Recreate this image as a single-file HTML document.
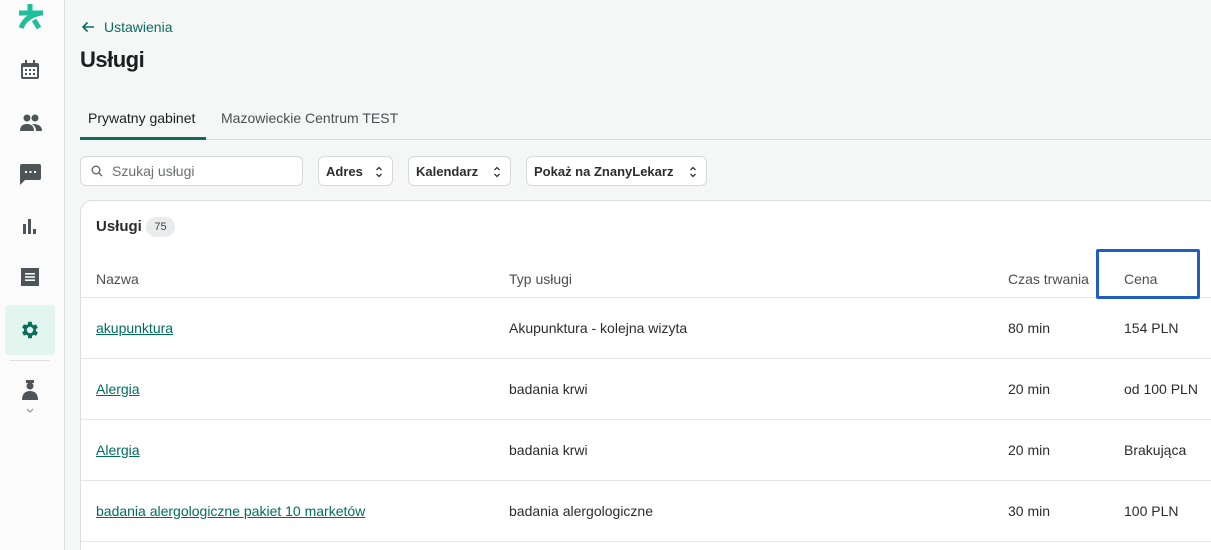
<!DOCTYPE html>
<html><head><meta charset="utf-8"><style>
*{box-sizing:border-box;margin:0;padding:0}
html,body{width:1211px;height:550px;overflow:hidden}
body{background:#f5f6f6;font-family:"Liberation Sans",sans-serif;color:#1c1f21;position:relative}
.sb{position:absolute;left:0;top:0;width:65px;height:550px;background:#fbfbfb;border-right:1px solid #dcdfe0}
.ic{position:absolute;left:20px}
.abs{position:absolute}
.btn{position:absolute;top:156px;height:30px;border:1px solid #d5d9db;border-radius:6px;background:#fff;font-size:13px;font-weight:bold;color:#2a2d2f;padding:7px 0 0 7px}
.btn svg{position:absolute;right:9px;top:9px}
.card{position:absolute;left:80px;top:200px;width:1140px;height:360px;background:#fff;border:1px solid #dcdfe0;border-radius:12px}
.row{position:absolute;left:81px;width:1130px;border-top:1px solid #e4e6e7}
.t{position:absolute;font-size:14px;color:#2a2d2f}
.lnk{color:#006d5b;text-decoration:underline}
.h{color:#4a4f52}
</style></head><body>
<div class="sb">
<svg class="abs" style="left:16px;top:4px" width="30" height="26" viewBox="0 0 30 26"><g stroke="#1fbf9a" stroke-width="5" fill="none"><path d="M3 9h24"/><path d="M14 0v9"/><path d="M5 24C8 16 14 11 25 9"/><path d="M18 16l5 8"/></g></svg>
<svg class="ic" style="top:60px" width="20" height="20" viewBox="0 0 20 20"><rect x="1" y="3" width="18" height="16" rx="2" fill="#4d5558"/><rect x="3" y="7" width="14" height="10" fill="#fbfbfb"/><rect x="5" y="0" width="2" height="4" fill="#4d5558"/><rect x="13" y="0" width="2" height="4" fill="#4d5558"/><g fill="#4d5558"><rect x="5" y="9" width="2" height="2"/><rect x="9" y="9" width="2" height="2"/><rect x="13" y="9" width="2" height="2"/><rect x="5" y="13" width="2" height="2"/><rect x="9" y="13" width="2" height="2"/><rect x="13" y="13" width="2" height="2"/></g></svg>
<svg class="ic" style="top:114px" width="22" height="18" viewBox="0 0 22 18"><circle cx="7" cy="4" r="3.5" fill="#4d5558"/><circle cx="15" cy="4" r="3.5" fill="#4d5558"/><path d="M0 17c0-5 3-7 7-7s7 2 7 7z" fill="#4d5558"/><path d="M12 10c5 0 10 1 10 7h-6c0-3-1-5-4-7z" fill="#4d5558"/></svg>
<svg class="ic" style="top:164px" width="21" height="21" viewBox="0 0 21 21"><path d="M0 2a2 2 0 012-2h17a2 2 0 012 2v12a2 2 0 01-2 2H5l-5 5z" fill="#4d5558"/><g fill="#fbfbfb"><rect x="5" y="7" width="2" height="2"/><rect x="9.5" y="7" width="2" height="2"/><rect x="14" y="7" width="2" height="2"/></g></svg>
<svg class="ic" style="top:217px" width="18" height="18" viewBox="0 0 18 18"><g fill="#4d5558"><rect x="3" y="7" width="3" height="10"/><rect x="8" y="2" width="3" height="15"/><rect x="13" y="12" width="3" height="5"/></g></svg>
<svg class="ic" style="top:267px" width="20" height="20" viewBox="0 0 20 20"><rect x="1" y="1" width="18" height="18" fill="#4d5558"/><g fill="#fbfbfb"><rect x="5" y="6" width="10" height="1.6"/><rect x="5" y="9.2" width="10" height="1.6"/><rect x="5" y="12.4" width="10" height="1.6"/></g></svg>
<div class="abs" style="left:5px;top:305px;width:50px;height:50px;background:#e2f6ef;border-radius:4px"></div>
<svg class="abs" style="left:19px;top:319px" width="22" height="22" viewBox="0 0 24 24"><path fill="#0b6e5c" d="M19.4 13a7.5 7.5 0 000-2l2.1-1.6-2-3.5-2.5 1a7 7 0 00-1.7-1L15 3h-4l-.4 2.7a7 7 0 00-1.7 1l-2.5-1-2 3.5L6.5 11a7.5 7.5 0 000 2l-2.1 1.6 2 3.5 2.5-1a7 7 0 001.7 1L11 21h4l.4-2.7a7 7 0 001.7-1l2.5 1 2-3.5zM13 15.5a3.5 3.5 0 110-7 3.5 3.5 0 010 7z" transform="translate(-1 0)"/></svg>
<div class="abs" style="left:10px;top:360px;width:40px;height:1px;background:#dcdfe0"></div>
<svg class="abs" style="left:22px;top:380px" width="16" height="20" viewBox="0 0 16 20"><rect x="4" y="0" width="8" height="3" fill="#4d5558"/><circle cx="8" cy="6" r="3.5" fill="#4d5558"/><path d="M0 20c0-6 3-9 8-9s8 3 8 9z" fill="#4d5558"/></svg>
<svg class="abs" style="left:26px;top:408px" width="8" height="5" viewBox="0 0 8 5"><path d="M1 1l3 3 3-3" stroke="#888" fill="none"/></svg>
</div>

<svg class="abs" style="left:81px;top:21px" width="14" height="12" viewBox="0 0 14 12"><path d="M13 6H2M6.5 1.5L2 6l4.5 4.5" stroke="#0b6e5c" stroke-width="1.6" fill="none"/></svg>
<div class="abs" style="left:104px;top:19px;font-size:14px;color:#0b6e5c">Ustawienia</div>
<div class="abs" style="left:80px;top:47px;font-size:22px;font-weight:bold;letter-spacing:-0.5px">Usługi</div>
<div class="abs" style="left:80px;top:139px;width:1131px;height:1px;background:#d9dcdd"></div>
<div class="abs" style="left:88px;top:110px;font-size:14px;color:#1c1f21">Prywatny gabinet</div>
<div class="abs" style="left:80px;top:137px;width:126px;height:3px;background:#0b6e5c"></div>
<div class="abs" style="left:221px;top:110px;font-size:14px;color:#4a4f52">Mazowieckie Centrum TEST</div>

<div class="abs" style="left:80px;top:156px;width:223px;height:30px;border:1px solid #d5d9db;border-radius:6px;background:#fff"></div>
<svg class="abs" style="left:91px;top:165px" width="12" height="12" viewBox="0 0 12 12"><circle cx="5" cy="5" r="3.8" stroke="#666" stroke-width="1.4" fill="none"/><path d="M8 8l3 3" stroke="#666" stroke-width="1.4"/></svg>
<div class="abs" style="left:112px;top:163px;font-size:14px;color:#6a7073">Szukaj usługi</div>
<div class="btn" style="left:318px;width:75px">Adres<svg width="8" height="12" viewBox="0 0 8 12"><path d="M1.5 4L4 1.5 6.5 4M1.5 8L4 10.5 6.5 8" stroke="#333" stroke-width="1.3" fill="none"/></svg></div>
<div class="btn" style="left:408px;width:103px">Kalendarz<svg width="8" height="12" viewBox="0 0 8 12"><path d="M1.5 4L4 1.5 6.5 4M1.5 8L4 10.5 6.5 8" stroke="#333" stroke-width="1.3" fill="none"/></svg></div>
<div class="btn" style="left:526px;width:181px">Pokaż na ZnanyLekarz<svg width="8" height="12" viewBox="0 0 8 12"><path d="M1.5 4L4 1.5 6.5 4M1.5 8L4 10.5 6.5 8" stroke="#333" stroke-width="1.3" fill="none"/></svg></div>

<div class="card"></div>
<div class="t" style="left:96px;top:218px;font-weight:bold;font-size:15px">Usługi</div>
<div class="abs" style="left:146px;top:217px;width:29px;height:20px;border-radius:10px;background:#e9ebec;font-size:11px;color:#444;text-align:center;padding-top:4px">75</div>

<div class="t h" style="left:96px;top:271px">Nazwa</div>
<div class="t h" style="left:509px;top:271px">Typ usługi</div>
<div class="t h" style="left:1008px;top:271px">Czas trwania</div>
<div class="t h" style="left:1124px;top:271px">Cena</div>

<div class="row" style="top:297px"></div>
<div class="row" style="top:358px"></div>
<div class="row" style="top:419px"></div>
<div class="row" style="top:480px"></div>
<div class="row" style="top:541px"></div>
<div class="abs" style="left:1096px;top:249px;width:104px;height:50px;border:3px solid #1f5fbf;border-radius:2px"></div>

<div class="t lnk" style="left:96px;top:320px">akupunktura</div>
<div class="t" style="left:509px;top:320px">Akupunktura - kolejna wizyta</div>
<div class="t" style="left:1008px;top:320px">80 min</div>
<div class="t" style="left:1124px;top:320px">154 PLN</div>

<div class="t lnk" style="left:96px;top:381px">Alergia</div>
<div class="t" style="left:509px;top:381px">badania krwi</div>
<div class="t" style="left:1008px;top:381px">20 min</div>
<div class="t" style="left:1124px;top:381px">od 100 PLN</div>

<div class="t lnk" style="left:96px;top:442px">Alergia</div>
<div class="t" style="left:509px;top:442px">badania krwi</div>
<div class="t" style="left:1008px;top:442px">20 min</div>
<div class="t" style="left:1124px;top:442px">Brakująca</div>

<div class="t lnk" style="left:96px;top:503px">badania alergologiczne pakiet 10 marketów</div>
<div class="t" style="left:509px;top:503px">badania alergologiczne</div>
<div class="t" style="left:1008px;top:503px">30 min</div>
<div class="t" style="left:1124px;top:503px">100 PLN</div>
</body></html>
